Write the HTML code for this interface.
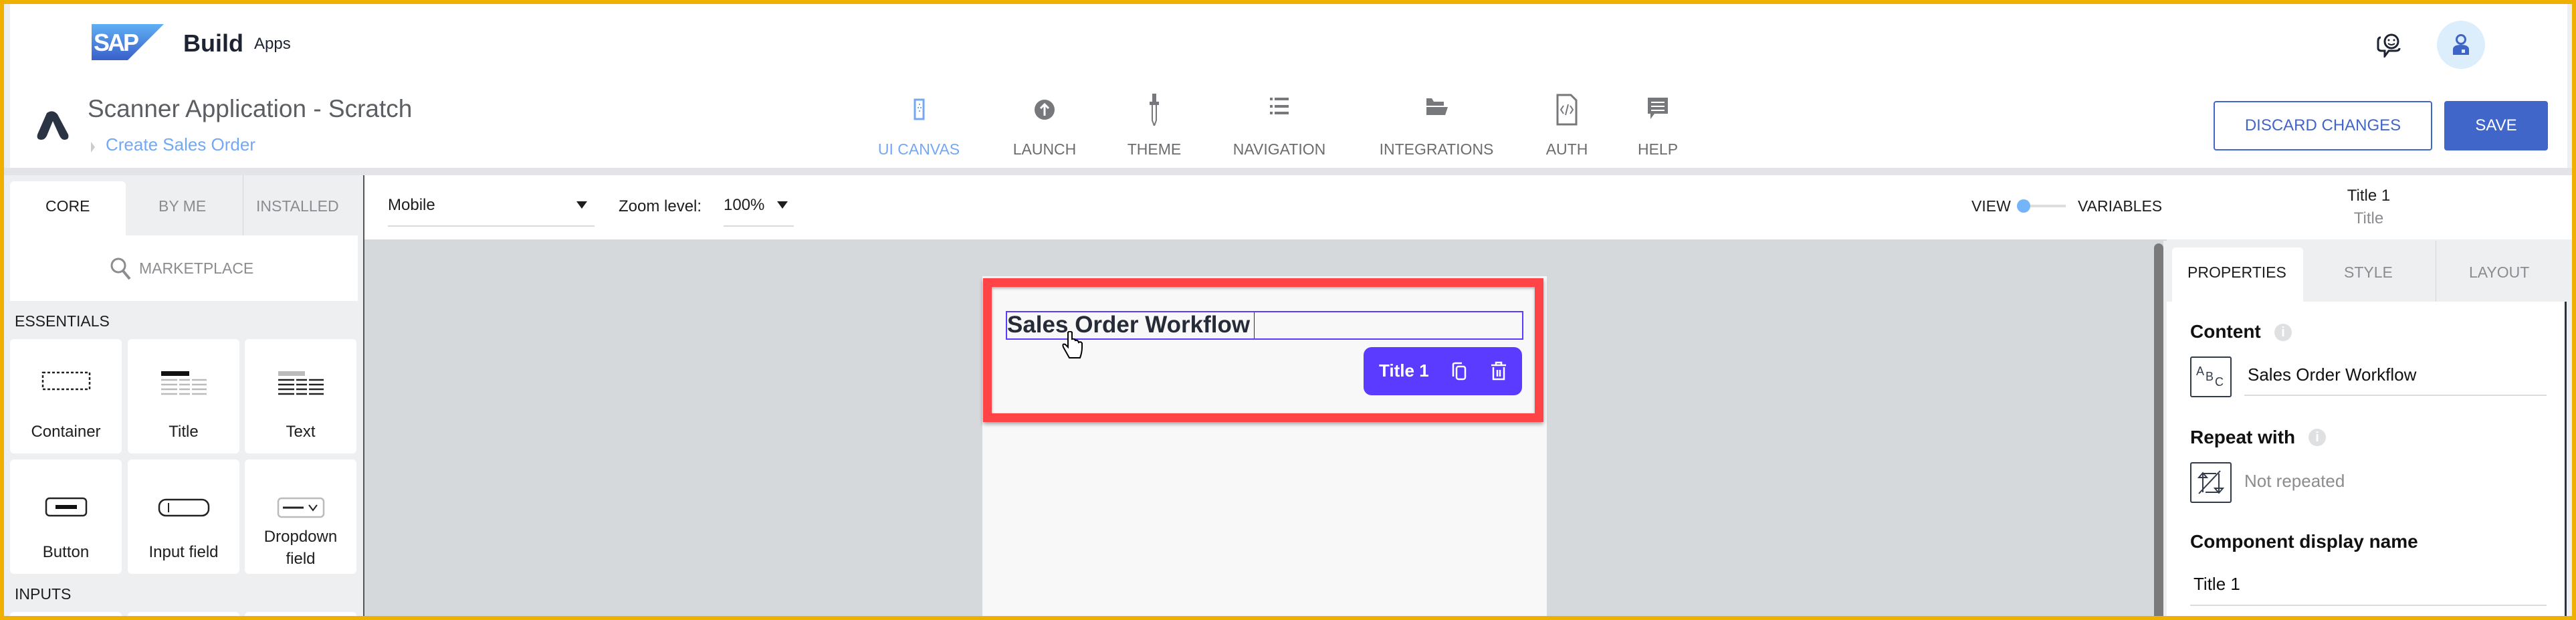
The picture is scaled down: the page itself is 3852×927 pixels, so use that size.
<!DOCTYPE html>
<html style="overflow:hidden;width:3852px;height:927px"><head><meta charset="utf-8"><style>
*{margin:0;padding:0;box-sizing:border-box}
body{width:3852px;height:927px;overflow:hidden;background:#f0b000;font-family:"Liberation Sans",sans-serif;position:relative}
.a{position:absolute}
.t{position:absolute;white-space:nowrap}
.nav{position:absolute;top:140px;width:200px;margin-left:-100px;text-align:center;color:#6a6d70;font-size:23px}
.nav svg{display:block;margin:0 auto 22px;height:48px}
.card{position:absolute;background:#fff;border-radius:6px;width:167px;height:171px;text-align:center;font-size:24px;color:#1d1d1d;overflow:hidden}
.card .lb{position:absolute;left:0;right:0;bottom:16px;line-height:32px}
.card svg{position:absolute;left:50%;top:48px;transform:translateX(-50%)}
</style></head><body>
<div class="a" style="left:6px;top:6px;width:3840px;height:915px;background:#eeeff1"></div>
<div class="a" style="left:15px;top:6px;width:3824px;height:245px;background:#fff"></div>
<div class="a" style="left:6px;top:251px;width:3840px;height:11px;background:#e3e4e7"></div>
<svg class="a" style="left:137px;top:36px" width="108" height="54" viewBox="0 0 108 54">
<defs><linearGradient id="g" x1="0" y1="0" x2="0" y2="1"><stop offset="0" stop-color="#5fb0f4"/><stop offset="1" stop-color="#3a5fc9"/></linearGradient></defs>
<polygon points="0,0 108,0 54,54 0,54" fill="url(#g)"/>
<text x="3" y="40" font-family="Liberation Sans" font-weight="bold" font-size="36" fill="#fff" letter-spacing="-3">SAP</text></svg>
<div class="t" style="left:274px;top:44px;font-size:36px;font-weight:bold;color:#1d2333">Build</div>
<div class="t" style="left:380px;top:52px;font-size:24px;color:#1d2333">Apps</div>
<svg class="a" style="left:54px;top:165px" width="50" height="44" viewBox="0 0 50 44"><path d="M16 4 Q25 -2 32 6 L48 36 Q50 44 42 44 Q38 44 35 38 L25 16 L16 38 Q13 44 8 44 Q0 44 2 36 Z" fill="#2a3443"/></svg>
<div class="t" style="left:131px;top:142px;font-size:37px;color:#5b5e62">Scanner Application - Scratch</div>
<svg class="a" style="left:135px;top:210px" width="8" height="20"><path d="M1 2 L7 10 L1 18" fill="#ccc"/></svg>
<div class="t" style="left:158px;top:201px;font-size:26px;color:#74a8f5">Create Sales Order</div>
<div class="nav" style="left:1374px;color:#74a8f5"><svg width="30" height="48" viewBox="0 0 30 48"><rect x="9" y="9" width="13" height="29" fill="none" stroke="#74a8f5" stroke-width="3"/><rect x="13" y="20" width="2" height="2" fill="#74a8f5"/><rect x="17" y="20" width="2" height="2" fill="#74a8f5"/><rect x="15" y="15" width="2" height="2" fill="#74a8f5"/><rect x="15" y="25" width="2" height="2" fill="#74a8f5"/></svg>UI CANVAS</div>
<div class="nav" style="left:1562px"><svg width="32" height="48" viewBox="0 0 32 48"><circle cx="16" cy="24" r="15" fill="#76787c"/><path d="M16 33 V17 M10 22 L16 16 L22 22" stroke="#fff" stroke-width="3" fill="none"/></svg>LAUNCH</div>
<div class="nav" style="left:1726px"><svg width="20" height="48" viewBox="0 0 20 48"><rect x="7" y="0" width="6" height="12" fill="#76787c"/><rect x="3" y="12" width="14" height="5" fill="#76787c"/><path d="M7 17 V40 L10 48 L13 40 V17" fill="none" stroke="#76787c" stroke-width="2"/></svg>THEME</div>
<div class="nav" style="left:1913px"><svg width="32" height="48" viewBox="0 0 32 48"><g fill="#76787c"><rect x="2" y="6" width="4" height="4"/><rect x="9" y="6" width="21" height="4"/><rect x="2" y="17" width="4" height="4"/><rect x="9" y="17" width="21" height="4"/><rect x="2" y="27" width="4" height="4"/><rect x="9" y="27" width="21" height="4"/></g></svg>NAVIGATION</div>
<div class="nav" style="left:2148px"><svg width="34" height="48" viewBox="0 0 34 48"><path d="M2 7 H10 L13 12 H28 V18 H2 Z M2 20 H34 L30 32 H2 Z" fill="#76787c"/></svg>INTEGRATIONS</div>
<div class="nav" style="left:2343px"><svg width="32" height="48" viewBox="0 0 32 48"><path d="M2 2 H22 L30 10 V46 H2 Z" fill="none" stroke="#76787c" stroke-width="3"/><path d="M11 18 L7 24 L11 30 M21 18 L25 24 L21 30 M18 16 L14 32" stroke="#76787c" stroke-width="2" fill="none"/></svg>AUTH</div>
<div class="nav" style="left:2479px"><svg width="32" height="48" viewBox="0 0 32 48"><path d="M1 6 H31 V30 H11 L5 38 V30 H1 Z" fill="#76787c"/><path d="M6 13 H26 M6 19 H26 M6 25 H26" stroke="#fff" stroke-width="2"/></svg>HELP</div>
<svg class="a" style="left:3552px;top:48px" width="40" height="38" viewBox="0 0 40 38"><path d="M8 8 Q4 8 4 14 V24 Q4 28 10 28 H14 L14 36 L20 28 H30 Q36 28 36 24" fill="none" stroke="#1d2333" stroke-width="3"/><circle cx="24" cy="14" r="10" fill="none" stroke="#1d2333" stroke-width="3"/><circle cx="20" cy="12" r="1.5" fill="#1d2333"/><circle cx="28" cy="12" r="1.5" fill="#1d2333"/><path d="M19 17 Q24 21 29 17" stroke="#1d2333" stroke-width="2" fill="none"/></svg>
<div class="a" style="left:3644px;top:31px;width:72px;height:72px;border-radius:50%;background:#dcedfc"></div>
<svg class="a" style="left:3666px;top:50px" width="28" height="34" viewBox="0 0 28 34"><circle cx="14" cy="9" r="6.5" fill="none" stroke="#3f64c8" stroke-width="3"/><path d="M2 32 V24 Q2 17 14 17 Q26 17 26 24 V32 Z" fill="#3f64c8"/><rect x="15" y="24" width="5" height="5" fill="#dcedfc"/></svg>
<div class="a" style="left:3310px;top:151px;width:327px;height:74px;border:2px solid #4166c9;border-radius:4px;color:#4166c9;font-size:24px;text-align:center;line-height:70px">DISCARD CHANGES</div>
<div class="a" style="left:3655px;top:151px;width:155px;height:74px;background:#4166c9;border-radius:4px;color:#fff;font-size:24px;text-align:center;line-height:74px">SAVE</div>
<div class="a" style="left:15px;top:271px;width:173px;height:81px;background:#fff;border-radius:6px 6px 0 0"></div>
<div class="t" style="left:68px;top:295px;font-size:23px;color:#1d1d1d">CORE</div>
<div class="t" style="left:237px;top:295px;font-size:23px;color:#8a8c8f">BY ME</div>
<div class="a" style="left:363px;top:262px;width:1px;height:90px;background:#d5d6d8"></div>
<div class="t" style="left:383px;top:295px;font-size:23px;color:#8a8c8f">INSTALLED</div>
<div class="a" style="left:15px;top:352px;width:520px;height:98px;background:#fff"></div>
<svg class="a" style="left:164px;top:384px" width="34" height="36" viewBox="0 0 34 36"><circle cx="13" cy="13" r="10" fill="none" stroke="#8a8c8f" stroke-width="3"/><path d="M20 21 L30 33" stroke="#8a8c8f" stroke-width="4"/></svg>
<div class="t" style="left:208px;top:388px;font-size:23px;color:#8a8c8f">MARKETPLACE</div>
<div class="t" style="left:22px;top:467px;font-size:23px;color:#1d1d1d">ESSENTIALS</div>
<div class="card" style="left:15px;top:507px"><svg width="74" height="30" viewBox="0 0 74 30"><rect x="2" y="2" width="70" height="25" fill="none" stroke="#222" stroke-width="2.5" stroke-dasharray="4 3"/></svg><div class="lb">Container</div></div>
<div class="card" style="left:191px;top:507px"><svg width="68" height="36" viewBox="0 0 68 36"><rect x="0" y="0" width="42" height="7" fill="#111"/><g stroke="#bbb" stroke-width="2.5"><path d="M0 13 H68 M0 20 H68 M0 27 H68 M0 34 H68" stroke-dasharray="24 3 16 3"/></g></svg><div class="lb">Title</div></div>
<div class="card" style="left:366px;top:507px"><svg width="68" height="36" viewBox="0 0 68 36"><rect x="0" y="0" width="40" height="7" fill="#bbb"/><g stroke="#222" stroke-width="2.5"><path d="M0 13 H68 M0 20 H68 M0 27 H68 M0 34 H68" stroke-dasharray="24 3 16 3"/></g></svg><div class="lb">Text</div></div>
<div class="card" style="left:15px;top:687px"><svg width="64" height="30" viewBox="0 0 64 30" style="top:56px"><rect x="2" y="2" width="60" height="26" rx="5" fill="none" stroke="#222" stroke-width="2.5"/><rect x="16" y="12" width="32" height="6" fill="#111"/></svg><div class="lb">Button</div></div>
<div class="card" style="left:191px;top:687px"><svg width="78" height="28" viewBox="0 0 78 28" style="top:58px"><rect x="2" y="2" width="74" height="24" rx="10" fill="none" stroke="#222" stroke-width="2.5"/><path d="M16 7 V21" stroke="#222" stroke-width="2"/></svg><div class="lb">Input field</div></div>
<div class="card" style="left:366px;top:687px"><svg width="72" height="32" viewBox="0 0 72 32" style="top:56px"><rect x="2" y="2" width="68" height="28" rx="5" fill="none" stroke="#bbb" stroke-width="2.5"/><path d="M9 16 H40" stroke="#222" stroke-width="3"/><path d="M48 12 L54 20 L60 12" stroke="#222" stroke-width="2" fill="none"/></svg><div class="lb" style="bottom:6px;line-height:33px">Dropdown<br>field</div></div>
<div class="t" style="left:22px;top:875px;font-size:23px;color:#1d1d1d">INPUTS</div>
<div class="card" style="left:15px;top:915px;height:6px;border-radius:6px 6px 0 0"></div><div class="card" style="left:191px;top:915px;height:6px;border-radius:6px 6px 0 0"></div><div class="card" style="left:366px;top:915px;height:6px;border-radius:6px 6px 0 0"></div>
<div class="a" style="left:543px;top:262px;width:2px;height:659px;background:#555"></div>
<div class="a" style="left:545px;top:262px;width:3301px;height:96px;background:#fff"></div>
<div class="t" style="left:580px;top:293px;font-size:24px;color:#1d1d1d">Mobile</div>
<svg class="a" style="left:862px;top:301px" width="16" height="12"><path d="M0 0 H16 L8 11 Z" fill="#1d1d1d"/></svg>
<div class="a" style="left:580px;top:337px;width:309px;height:2px;background:#d9d9de"></div>
<div class="t" style="left:925px;top:295px;font-size:24px;color:#1d1d1d">Zoom level:</div>
<div class="t" style="left:1082px;top:293px;font-size:24px;color:#1d1d1d">100%</div>
<svg class="a" style="left:1162px;top:301px" width="16" height="12"><path d="M0 0 H16 L8 11 Z" fill="#1d1d1d"/></svg>
<div class="a" style="left:1082px;top:337px;width:105px;height:2px;background:#d9d9de"></div>
<div class="t" style="left:2948px;top:295px;font-size:23px;color:#1d1d1d">VIEW</div>
<div class="a" style="left:3030px;top:306px;width:59px;height:4px;background:#ddd"></div>
<div class="a" style="left:3016px;top:298px;width:20px;height:20px;border-radius:50%;background:#74b4f8"></div>
<div class="t" style="left:3107px;top:295px;font-size:23px;color:#1d1d1d">VARIABLES</div>
<div class="t" style="left:3542px;top:279px;transform:translateX(-50%);font-size:24px;color:#1d1d1d">Title 1</div>
<div class="t" style="left:3542px;top:313px;transform:translateX(-50%);font-size:24px;color:#8a8c8f">Title</div>
<div class="a" style="left:545px;top:358px;width:2695px;height:563px;background:#d6d9dc"></div>
<div class="a" style="left:3221px;top:364px;width:14px;height:557px;background:#7a7a7a;border-radius:7px 7px 0 0"></div>
<div class="a" style="left:1469px;top:413px;width:844px;height:508px;background:#f8f8f8"></div>
<div class="a" style="left:1470px;top:416px;width:838px;height:215px;border:13px solid #ff4448;box-shadow:0 3px 6px rgba(0,0,0,.35), inset 0 2px 4px rgba(0,0,0,.3)"></div>
<div class="a" style="left:1504px;top:465px;width:774px;height:43px;border:2px solid #5a3cff"></div>
<div class="t" style="left:1506px;top:466px;font-size:35px;font-weight:bold;color:#262b38">Sales Order Workflow</div>
<div class="a" style="left:1875px;top:467px;width:1px;height:39px;background:#333"></div>
<svg class="a" style="left:1585px;top:495px" width="36" height="44" viewBox="0 0 36 44"><path d="M12 2 V24 L8 20 Q3 18 5 24 L14 40 H30 Q33 32 33 24 V18 Q31 15 28 17 Q27 13 23 14 Q22 11 18 12 V2 Q15 -1 12 2 Z" fill="#fff" stroke="#000" stroke-width="2"/></svg>
<div class="a" style="left:2039px;top:519px;width:237px;height:72px;background:#5b3bff;border-radius:12px"></div>
<div class="t" style="left:2062px;top:539px;font-size:26px;font-weight:bold;color:#fff">Title 1</div>
<svg class="a" style="left:2170px;top:541px" width="24" height="28" viewBox="0 0 24 28"><path d="M3 22 V4 Q3 2 6 2 H16" fill="none" stroke="#fff" stroke-width="2.5"/><rect x="8" y="7" width="13" height="19" rx="3" fill="none" stroke="#fff" stroke-width="2.5"/></svg>
<svg class="a" style="left:2229px;top:540px" width="24" height="30" viewBox="0 0 24 30"><path d="M8 5 V2 H16 V5 M1 6 H23 M4 9 V27 H20 V9 M10 13 V23 M14 13 V23" fill="none" stroke="#fff" stroke-width="2.5"/></svg>
<div class="a" style="left:3235px;top:360px;width:611px;height:561px;background:#eeeff1"></div>
<div class="a" style="left:3248px;top:370px;width:196px;height:81px;background:#fff;border-radius:6px 6px 0 0"></div>
<div class="t" style="left:3271px;top:394px;font-size:23px;color:#1d1d1d">PROPERTIES</div>
<div class="t" style="left:3505px;top:394px;font-size:23px;color:#8a8c8f">STYLE</div>
<div class="a" style="left:3642px;top:360px;width:1px;height:91px;background:#d5d6d8"></div>
<div class="t" style="left:3692px;top:394px;font-size:23px;color:#8a8c8f">LAYOUT</div>
<div class="a" style="left:3240px;top:451px;width:595px;height:470px;background:#fff"></div>
<div class="t" style="left:3275px;top:480px;font-size:28px;font-weight:bold;color:#111">Content</div>
<div class="a" style="left:3401px;top:484px;width:26px;height:26px;border-radius:50%;background:#dfe0e2;color:#fff;font-size:20px;font-weight:bold;text-align:center;line-height:26px">i</div>
<div class="a" style="left:3275px;top:533px;width:62px;height:61px;border:2px solid #333a48;border-radius:3px"></div>
<div class="t" style="left:3284px;top:545px;font-size:18px;color:#333a48">A</div>
<div class="t" style="left:3298px;top:553px;font-size:18px;color:#333a48">B</div>
<div class="t" style="left:3312px;top:561px;font-size:18px;color:#333a48">C</div>
<div class="t" style="left:3361px;top:545px;font-size:26px;color:#111">Sales Order Workflow</div>
<div class="a" style="left:3356px;top:590px;width:452px;height:2px;background:#dcdcdf"></div>
<div class="t" style="left:3275px;top:638px;font-size:28px;font-weight:bold;color:#111">Repeat with</div>
<div class="a" style="left:3452px;top:641px;width:26px;height:26px;border-radius:50%;background:#dfe0e2;color:#fff;font-size:20px;font-weight:bold;text-align:center;line-height:26px">i</div>
<div class="a" style="left:3275px;top:691px;width:62px;height:61px;border:2px solid #333a48;border-radius:3px"></div>
<svg class="a" style="left:3284px;top:702px" width="44" height="40" viewBox="0 0 44 40"><path d="M10 34 V6 M4 12 L10 5 L16 12 Z M34 6 V34 M28 28 L34 35 L40 28 Z M10 6 H30 M14 34 H34 M4 36 L36 2" fill="none" stroke="#333a48" stroke-width="2"/></svg>
<div class="t" style="left:3356px;top:704px;font-size:26px;color:#8a8c8f">Not repeated</div>
<div class="t" style="left:3275px;top:794px;font-size:28px;font-weight:bold;color:#111">Component display name</div>
<div class="t" style="left:3280px;top:858px;font-size:26px;color:#111">Title 1</div>
<div class="a" style="left:3275px;top:904px;width:533px;height:2px;background:#dcdcdf"></div>
<div class="a" style="left:3835px;top:451px;width:3px;height:470px;background:#2a3443"></div>
</body></html>
